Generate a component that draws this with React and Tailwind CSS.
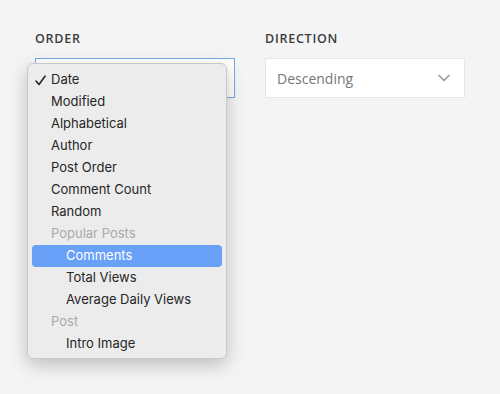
import { ChevronDown } from "lucide-react";

const items = [
  { label: "Date", checked: true },
  { label: "Modified" },
  { label: "Alphabetical" },
  { label: "Author" },
  { label: "Post Order" },
  { label: "Comment Count" },
  { label: "Random" },
  { label: "Popular Posts", group: true },
  { label: "Comments", nested: true, active: true },
  { label: "Total Views", nested: true },
  { label: "Average Daily Views", nested: true },
  { label: "Post", group: true },
  { label: "Intro Image", nested: true },
];

function Check() {
  return (
    <svg width="11" height="11" viewBox="0 0 11 11" fill="none">
      <path d="M1 6 L4 9.5 L10 1.2" stroke="#262626" strokeWidth="1.6" strokeLinecap="round" strokeLinejoin="round" />
    </svg>
  );
}

function Menu() {
  return (
    <div
      className="absolute left-[-8px] top-[5px] w-[200px] rounded-[6px] bg-[#ececec] border border-[#c9c9c9] shadow-[0_6px_18px_rgba(0,0,0,0.22)] pt-[5px] pb-[3px] px-[4px] z-10"
      style={{ fontFamily: "Inter, 'Noto Sans', sans-serif" }}
    >
      {items.map((it) => (
        <div
          key={it.label}
          className={
            "h-[22px] flex items-center rounded-[4px] text-[13px] " +
            (it.active ? "bg-[#69a1f8] text-white" : it.group ? "text-[#a9a9a9]" : "text-[#262626]")
          }
        >
          <span className="w-[19px] pl-[3px] flex items-center">{it.checked ? <Check /> : null}</span>
          <span className={it.nested ? "pl-[15px]" : ""}>{it.label}</span>
        </div>
      ))}
    </div>
  );
}

export default function App() {
  return (
    <div className="w-[500px] h-[394px] bg-[#f4f4f4] pt-[32px] pl-[35px]">
      <div className="flex gap-[30px]">
        <div className="w-[200px]">
          <div
            className="text-[12.5px] font-semibold tracking-[0.06em] text-[#3c3c3c] h-[14px] leading-[14px]"
            style={{ fontFamily: "'Open Sans', sans-serif" }}
          >
            ORDER
          </div>
          <div className="relative mt-[12px]">
            <div className="h-[40px] bg-white border border-[#7ba7e6]" />
            <Menu />
          </div>
        </div>
        <div className="w-[200px]">
          <div
            className="text-[12.5px] font-semibold tracking-[0.06em] text-[#3c3c3c] h-[14px] leading-[14px]"
            style={{ fontFamily: "'Open Sans', sans-serif" }}
          >
            DIRECTION
          </div>
          <div
            className="mt-[12px] h-[40px] bg-white border border-[#e6e6e6] flex items-center justify-between pl-[11px] pr-[10px]"
            style={{ fontFamily: "'Open Sans', sans-serif" }}
          >
            <span className="text-[14px] text-[#777]">Descending</span>
            <ChevronDown size={20} strokeWidth={2} className="text-[#9a9a9a]" />
          </div>
        </div>
      </div>
    </div>
  );
}
